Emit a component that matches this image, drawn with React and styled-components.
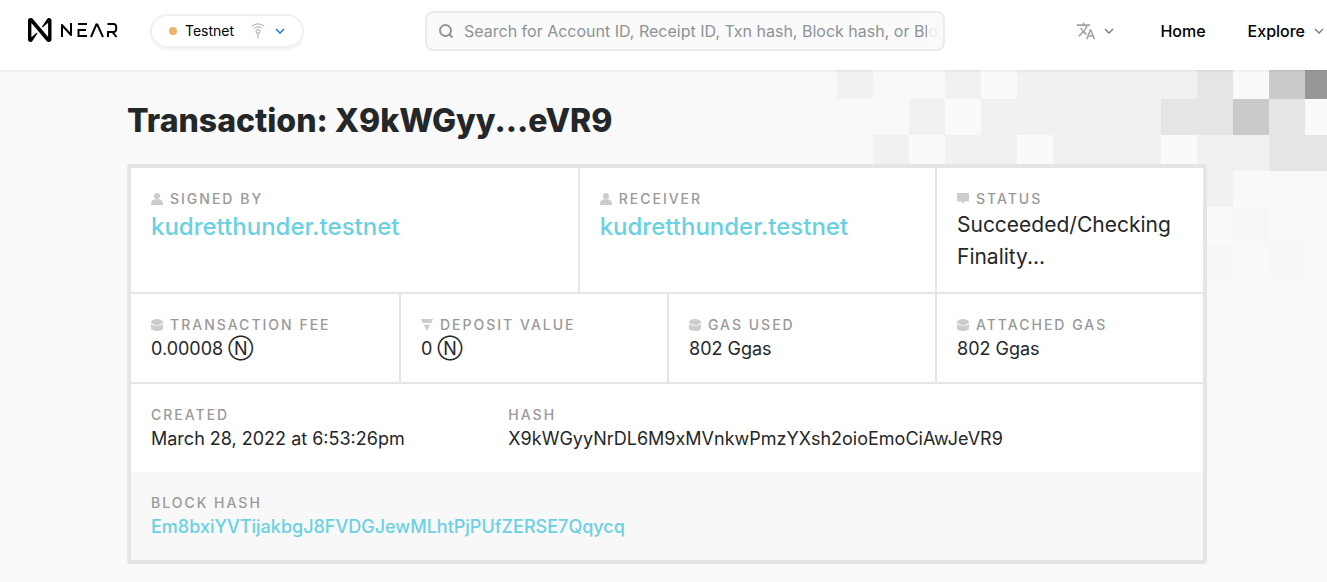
import React from "react";
import styled, { createGlobalStyle } from "styled-components";

const GlobalStyle = createGlobalStyle`
  * { box-sizing: border-box; }
  body {
    margin: 0;
    background: #f9f9f9;
    color: #24272a;
    font-family: Inter, "Liberation Sans", sans-serif;
    font-size: 16px;
    line-height: 24px;
    overflow-x: hidden;
  }
  a { color: inherit; text-decoration: none; }
  button { font: inherit; color: inherit; background: none; border: 0; padding: 0; cursor: pointer; }
`;

const Page = styled.div`
  position: relative;
  overflow: hidden;
  padding-bottom: 18px;
`;

const Header = styled.header`
  position: relative;
  z-index: 2;
  display: flex;
  align-items: center;
  height: 70px;
  padding: 0 3px 8px 28px;
  background: #fff;
  box-shadow: 0 0 4px rgba(0, 0, 0, 0.12);
`;

const LogoLink = styled.a`
  display: flex;
  align-items: center;
  margin-right: 32px;
`;

const NetworkButton = styled.button`
  && {
    display: flex;
    align-items: center;
    width: 154px;
    height: 34px;
    padding: 0 17px;
    border: 2px solid #f1f1f1;
    border-radius: 17px;
    background: #fff;
    box-shadow: 0 2px 3px rgba(0, 0, 0, 0.05);
    color: #000;
    font-size: 14px;
    line-height: 20px;
    text-align: left;
  }
`;

const Dot = styled.span`
  width: 8px;
  height: 8px;
  margin-right: 8px;
  border-radius: 50%;
  background: #e9b56a;
`;

const NetworkName = styled.span`
  flex: 1;
`;

const NetworkIcons = styled.span`
  display: flex;
  align-items: center;
  gap: 10px;
`;

const SearchForm = styled.form`
  position: relative;
  display: flex;
  align-items: center;
  gap: 10px;
  flex: 0 1 520px;
  height: 40px;
  margin-left: 121px;
  padding: 0 6px 0 12px;
  border: 2px solid #ebebeb;
  border-radius: 8px;
  background: #fafafa;
`;

const SearchInput = styled.input`
  flex: 1;
  min-width: 0;
  height: 100%;
  padding: 0;
  border: 0;
  outline: 0;
  background: transparent;
  color: #24272a;
  font: inherit;
  &::placeholder { color: #8d9396; opacity: 1; }
`;

const SearchFade = styled.span`
  position: absolute;
  top: 4px;
  bottom: 4px;
  right: 4px;
  width: 12px;
  background: rgba(250, 250, 250, 0.85);
  pointer-events: none;
`;

const Nav = styled.nav`
  display: flex;
  align-items: center;
  margin-left: auto;
  color: #000;
  font-weight: 500;
`;

const LanguageButton = styled.button`
  && {
    display: flex;
    align-items: center;
    gap: 8px;
    margin-right: 46px;
  }
`;

const NavLink = styled.a`
  margin-right: 42px;
`;

const NavButton = styled.button`
  && {
    display: flex;
    align-items: center;
    gap: 9px;
    font-weight: 500;
  }
`;

const Pattern = styled.svg`
  position: absolute;
  z-index: 0;
  top: 63px;
  right: -14px;
`;

const Main = styled.main`
  position: relative;
  z-index: 1;
  padding: 0 120px 0 127px;
`;

const Title = styled.h1`
  margin: 0;
  padding: 27px 0 19px;
  font-size: 32px;
  font-weight: 800;
  line-height: 48px;
`;

const Card = styled.section`
  border: 4px solid #e5e5e5;
  border-radius: 4px;
  background: #fff;
`;

const Row = styled.div`
  display: flex;
  min-height: ${(p) => (p.$tall ? "124px" : "88px")};
  background: ${(p) => (p.$shaded ? "#f8f8f8" : "#fff")};
`;

const RuledRow = styled(Row)`
  box-sizing: content-box;
  border-bottom: 2px solid #e5e5e5;
`;

const Cell = styled.div`
  flex: 0 0 calc(100% * ${(p) => p.$span} / 12);
  min-width: 0;
  padding: 20px 20px 0;
  ${RuledRow} > &:not(:first-child) { border-left: 2px solid #e5e5e5; }
`;

const Label = styled.div`
  display: flex;
  align-items: center;
  gap: 7px;
  color: #999;
  font-size: 14px;
  font-weight: 500;
  line-height: 21px;
  letter-spacing: 2px;
  text-transform: uppercase;
  white-space: nowrap;
`;

const Value = styled.div`
  font-size: 18px;
  line-height: 27px;
`;

const StatusValue = styled.div`
  font-size: 21px;
  line-height: 32px;
`;

const AccountLink = styled.a`
  display: block;
  color: #6ad1e3;
  font-size: 24px;
  font-weight: 500;
  line-height: 36px;
`;

const BlockLink = styled.a`
  display: block;
  color: #6ad1e3;
  font-size: 18px;
  font-weight: 500;
  line-height: 27px;
`;

const Logo = () => (
  <svg width="90" height="26" viewBox="0 0 90 26" fill="none" aria-label="NEAR" role="img">
    <path
      fill="#000"
      d="M19.1 1.1l-5 7.4c-.3.5.3 1.1.8.7l4.9-4.3c.1-.1.3 0 .3.2v13.4c0 .2-.3.3-.4.1L4.900.9C4.400.3 3.700 0 2.900 0h-.5C1.100 0 0 1.100 0 2.400v19.200C0 22.900 1.100 24 2.400 24c.8 0 1.600-.4 2-1.100l5-7.400c.3-.5-.3-1.100-.8-.7l-4.900 4.200c-.1.100-.3 0-.3-.2V5.500c0-.2.3-.3.4-.1l14.800 17.700c.5.600 1.200.9 2 .9h.5c1.300 0 2.400-1.100 2.400-2.400V2.400C23.500 1.100 22.400 0 21.100 0c-.8 0-1.600.4-2 1.100z"
    />
    <g stroke="#000" strokeWidth="2">
      <path d="M34 19V7L43 17V5" strokeLinejoin="round" />
      <path d="M50 6h9M59 18h-8.500V12H58" />
      <path d="M63 19l5.300-12.500h1L75 19" />
      <path d="M80 19V14h5.500c3.700 0 3.700-8 0-8H79.500M84.500 14l4 5" />
    </g>
  </svg>
);

const SignalIcon = () => (
  <svg width="14" height="16" viewBox="0 0 14 16" fill="none" stroke="#a2a2a2" aria-hidden="true">
    <circle cx="7" cy="8.500" r="2" />
    <path d="M7 10.500v5M.8 3.500c3-3.400 9.400-3.400 12.400 0M2.700 5.800c2.100-2.500 6.500-2.500 8.600 0" />
  </svg>
);

const Chevron = ({ color = "#757575" }) => (
  <svg width="10" height="6" viewBox="0 0 10 6" fill="none" stroke={color} strokeWidth="1.300" aria-hidden="true">
    <path d="M1 1l4 4 4-4" />
  </svg>
);

const SearchIcon = () => (
  <svg width="15" height="16" viewBox="0 0 15 16" fill="none" stroke="#949494" strokeWidth="2" aria-hidden="true">
    <circle cx="6.500" cy="7.500" r="5.500" />
    <path d="M10.300 11.500l3.200 3" />
  </svg>
);

const TranslateIcon = () => (
  <svg width="20" height="20" viewBox="0 0 24 24" fill="#a2a2a6" aria-hidden="true">
    <path d="M12.870 15.070l-2.540-2.510.03-.03c1.740-1.940 2.980-4.170 3.710-6.530H17V4h-7V2H8v2H1v1.990h11.170C11.500 7.920 10.440 9.750 9 11.350 8.070 10.320 7.300 9.190 6.690 8h-2c.73 1.630 1.730 3.170 2.980 4.560l-5.090 5.020L4 19l5-5 3.110 3.110.76-2.040zM18.500 10h-2L12 22h2l1.120-3h4.750L21 22h2l-4.500-12zm-2.620 7l1.620-4.330L19.120 17h-3.240z" />
  </svg>
);

const PersonIcon = () => (
  <svg width="12" height="12" viewBox="0 0 12 12" fill="#ccc" aria-hidden="true">
    <circle cx="6" cy="3" r="3" />
    <path d="M0 12v-1.500C0 8 2 6.500 4 6.300h4c2 .2 4 1.700 4 4.200V12z" />
  </svg>
);

const BubbleIcon = () => (
  <svg width="12" height="12" viewBox="0 0 12 12" fill="#ccc" aria-hidden="true">
    <path d="M0 0h12v8.500H6.800V11L4 8.500H0z" />
  </svg>
);

const CoinsIcon = () => (
  <svg width="12" height="12" viewBox="0 0 12 12" fill="#ccc" aria-hidden="true">
    <ellipse cx="6" cy="3" rx="6" ry="3" />
    <path d="M0 5c1.500 2.200 10.500 2.200 12 0v4.200c0 3.700-12 3.700-12 0z" />
  </svg>
);

const DepositIcon = () => (
  <svg width="12" height="12" viewBox="0 0 12 12" fill="#ccc" aria-hidden="true">
    <path d="M0 0h12l-1.500 4h-9zM2.800 5.800h6.400L6 12z" />
  </svg>
);

const TILE = 36;
const TILE_COLORS = { a: "#fafafa", b: "#f7f7f7", c: "#f1f1f1", d: "#e5e5e5", e: "#cacaca", f: "#989898" };
const TILE_ROWS = [
  "c..cacccccdaef",
  "..cacccccddeda",
  ".caccacccaccdd",
  "..........c...",
  "..........ab..",
  "..........b.b.",
];

const PixelPattern = () => (
  <Pattern width="504" height="216" viewBox="0 0 504 216" shapeRendering="crispEdges" aria-hidden="true">
    {TILE_ROWS.map((row, y) =>
      [...row].map((tone, x) =>
        tone === "." ? null : (
          <rect key={`${x}-${y}`} x={x * TILE} y={y * TILE} width={TILE} height={TILE} fill={TILE_COLORS[tone]} />
        )
      )
    )}
  </Pattern>
);

const Field = ({ span, label, icon, children }) => (
  <Cell $span={span}>
    <Label>
      {icon}
      <span>{label}</span>
    </Label>
    {children}
  </Cell>
);

export default function App() {
  return (
    <Page>
      <GlobalStyle />
      <Header>
        <LogoLink href="#">
          <Logo />
        </LogoLink>
        <NetworkButton type="button">
          <Dot />
          <NetworkName>Testnet</NetworkName>
          <NetworkIcons>
            <SignalIcon />
            <Chevron color="#0072ce" />
          </NetworkIcons>
        </NetworkButton>
        <SearchForm role="search">
          <SearchIcon />
          <SearchInput
            type="text"
            aria-label="Search"
            placeholder="Search for Account ID, Receipt ID, Txn hash, Block hash, or Block height"
          />
          <SearchFade />
        </SearchForm>
        <Nav>
          <LanguageButton type="button" aria-label="Language">
            <TranslateIcon />
            <Chevron />
          </LanguageButton>
          <NavLink href="#">Home</NavLink>
          <NavButton type="button">
            Explore
            <Chevron />
          </NavButton>
        </Nav>
      </Header>
      <PixelPattern />
      <Main>
        <Title>Transaction: X9kWGyy...eVR9</Title>
        <Card>
          <RuledRow $tall>
            <Field span={5} label="Signed by" icon={<PersonIcon />}>
              <AccountLink href="#">kudretthunder.testnet</AccountLink>
            </Field>
            <Field span={4} label="Receiver" icon={<PersonIcon />}>
              <AccountLink href="#">kudretthunder.testnet</AccountLink>
            </Field>
            <Field span={3} label="Status" icon={<BubbleIcon />}>
              <StatusValue>Succeeded/Checking Finality...</StatusValue>
            </Field>
          </RuledRow>
          <RuledRow>
            <Field span={3} label="Transaction fee" icon={<CoinsIcon />}>
              <Value>0.00008 Ⓝ</Value>
            </Field>
            <Field span={3} label="Deposit value" icon={<DepositIcon />}>
              <Value>0 Ⓝ</Value>
            </Field>
            <Field span={3} label="Gas used" icon={<CoinsIcon />}>
              <Value>802 Ggas</Value>
            </Field>
            <Field span={3} label="Attached gas" icon={<CoinsIcon />}>
              <Value>802 Ggas</Value>
            </Field>
          </RuledRow>
          <Row>
            <Field span={4} label="Created">
              <Value>March 28, 2022 at 6:53:26pm</Value>
            </Field>
            <Field span={8} label="Hash">
              <Value>X9kWGyyNrDL6M9xMVnkwPmzYXsh2oioEmoCiAwJeVR9</Value>
            </Field>
          </Row>
          <Row $shaded>
            <Field span={12} label="Block hash">
              <BlockLink href="#">Em8bxiYVTijakbgJ8FVDGJewMLhtPjPUfZERSE7Qqycq</BlockLink>
            </Field>
          </Row>
        </Card>
      </Main>
    </Page>
  );
}
